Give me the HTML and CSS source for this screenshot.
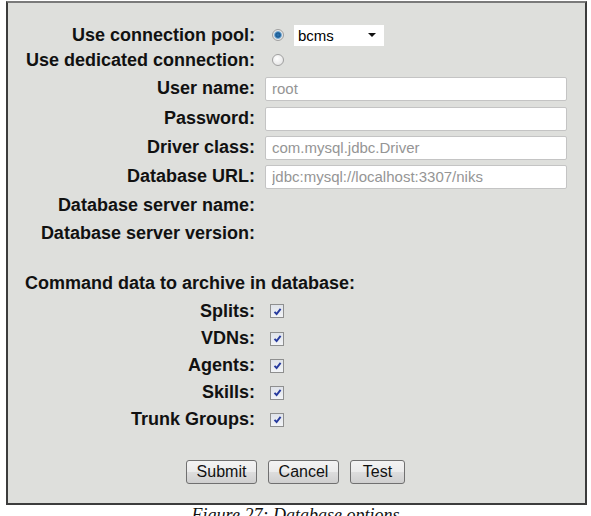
FILE: index.html
```html
<!DOCTYPE html>
<html lang="en">
<head>
  <meta charset="UTF-8">
  <title>Database options</title>
  <link rel="stylesheet" href="styles.css">
</head>
<body>

  <div class="frame">
    <form class="db-form">
      <div class="row r1">
        <label class="lbl">Use connection pool:</label>
        <div class="field">
          <input type="radio" name="conn" class="radio" checked>
          <div class="select"><span>bcms</span><i class="arrow"></i></div>
        </div>
      </div>
      <div class="row r2">
        <label class="lbl">Use dedicated connection:</label>
        <div class="field"><input type="radio" name="conn" class="radio"></div>
      </div>
      <div class="row r3">
        <label class="lbl">User name:</label>
        <div class="field"><input type="text" class="text" value="root"></div>
      </div>
      <div class="row r4">
        <label class="lbl">Password:</label>
        <div class="field"><input type="password" class="text"></div>
      </div>
      <div class="row r5">
        <label class="lbl">Driver class:</label>
        <div class="field"><input type="text" class="text" value="com.mysql.jdbc.Driver"></div>
      </div>
      <div class="row r6">
        <label class="lbl">Database URL:</label>
        <div class="field"><input type="text" class="text" value="jdbc:mysql://localhost:3307/niks"></div>
      </div>
      <div class="row r7">
        <label class="lbl">Database server name:</label>
        <div class="field"></div>
      </div>
      <div class="row r8">
        <label class="lbl">Database server version:</label>
        <div class="field"></div>
      </div>

      <div class="section">Command data to archive in database:</div>

      <div class="row chk-row first">
        <label class="lbl">Splits:</label>
        <div class="field"><span class="check"><svg viewBox="0 0 9 9"><path d="M1.5 4.8 L3.6 7 L7.6 1.8"/></svg></span></div>
      </div>
      <div class="row chk-row">
        <label class="lbl">VDNs:</label>
        <div class="field"><span class="check"><svg viewBox="0 0 9 9"><path d="M1.5 4.8 L3.6 7 L7.6 1.8"/></svg></span></div>
      </div>
      <div class="row chk-row">
        <label class="lbl">Agents:</label>
        <div class="field"><span class="check"><svg viewBox="0 0 9 9"><path d="M1.5 4.8 L3.6 7 L7.6 1.8"/></svg></span></div>
      </div>
      <div class="row chk-row">
        <label class="lbl">Skills:</label>
        <div class="field"><span class="check"><svg viewBox="0 0 9 9"><path d="M1.5 4.8 L3.6 7 L7.6 1.8"/></svg></span></div>
      </div>
      <div class="row chk-row">
        <label class="lbl">Trunk Groups:</label>
        <div class="field"><span class="check"><svg viewBox="0 0 9 9"><path d="M1.5 4.8 L3.6 7 L7.6 1.8"/></svg></span></div>
      </div>

      <div class="buttons">
        <button type="button" class="btn w71">Submit</button>
        <button type="button" class="btn w71">Cancel</button>
        <button type="button" class="btn w55">Test</button>
      </div>
    </form>
  </div>

  <p class="caption">Figure 27: Database options</p>

</body>
</html>
```

FILE: styles.css
```css
body { margin: 0; background: #fff; font-family: "Liberation Sans", Arial, sans-serif; overflow: hidden; }

.frame { margin: 1px 0 0 6px; width: 577px; height: 500px; border: 2px solid #3c3c3c; border-top-color: #7a7a7a; background: #dedfdc; }
.db-form { padding-top: 20px; }

.row { display: grid; grid-template-columns: 247px 1fr; align-items: center; }
.lbl { text-align: right; font-weight: bold; font-size: 18px; color: #111; }
.field { display: flex; align-items: center; padding-left: 10px; }

.r1 { height: 24px; }
.r2 { height: 26px; }
.r3 { height: 31px; }
.r4, .r5, .r6, .r7 { height: 29px; }
.r8 { height: 27px; }

.radio { appearance: none; margin: 0 0 0 7px; width: 12px; height: 12px; border-radius: 50%; border: 1px solid #a0a0a0; background: radial-gradient(circle at 40% 35%, #ffffff 0%, #e8e8e8 70%, #d0d0d0 100%); }
.radio:checked { background: radial-gradient(circle at 50% 50%, #2f78b4 0%, #1b5a92 32%, #6fa6d2 48%, #e8e8e8 62%, #d2d2d2 100%); }

.select { display: flex; align-items: center; justify-content: space-between; margin-left: 10px; width: 90px; height: 21px; background: #fff; padding: 0 8px 0 4px; box-sizing: border-box; font-size: 15px; color: #000; }
.arrow { width: 0; height: 0; border-left: 4px solid transparent; border-right: 4px solid transparent; border-top: 4px solid #111; }

.text { width: 302px; height: 24px; box-sizing: border-box; margin: 0; padding: 0 6px; border: 1px solid #c4c4c4; border-radius: 2px; background: #fff; font-family: "Liberation Sans", Arial, sans-serif; font-size: 15px; color: #959595; }

.section { margin-top: 23px; height: 27px; line-height: 27px; padding-left: 17px; font-weight: bold; font-size: 18px; color: #111; }

.chk-row { height: 27px; }
.chk-row.first { height: 28px; }
.check { display: inline-flex; align-items: center; justify-content: center; margin-left: 5px; width: 14px; height: 14px; box-sizing: border-box; border: 1px solid #8e8f8f; background: linear-gradient(#dfe3ea, #f2f4f7); }
.check svg { width: 9px; height: 9px; fill: none; stroke: #263a9e; stroke-width: 1.9; }

.buttons { display: flex; justify-content: center; gap: 11px; margin-top: 27px; padding-right: 2px; }
.btn { height: 24px; padding: 0; border: 1px solid #707070; border-radius: 3px; background: linear-gradient(#f3f3f3 0%, #ebebeb 50%, #dddddd 51%, #cfcfcf 100%); font-family: "Liberation Sans", Arial, sans-serif; font-size: 16px; color: #111; }
.w71 { width: 71px; }
.w55 { width: 55px; }

.caption { margin: 0; text-align: center; font-family: "Liberation Serif", "Times New Roman", serif; font-style: italic; font-size: 18px; line-height: 20px; color: #111; }
```
